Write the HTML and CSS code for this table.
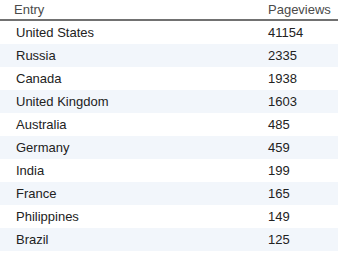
FILE: index.html
```
<!DOCTYPE html>
<html>
<head>
<meta charset="utf-8">
<link rel="stylesheet" href="styles.css">
</head>
<body>
<table class="stats">
<thead>
<tr><th class="c1">Entry</th><th class="c2">Pageviews</th></tr>
</thead>
<tbody>
<tr><td class="c1">United States</td><td class="c2">41154</td></tr>
<tr><td class="c1">Russia</td><td class="c2">2335</td></tr>
<tr><td class="c1">Canada</td><td class="c2">1938</td></tr>
<tr><td class="c1">United Kingdom</td><td class="c2">1603</td></tr>
<tr><td class="c1">Australia</td><td class="c2">485</td></tr>
<tr><td class="c1">Germany</td><td class="c2">459</td></tr>
<tr><td class="c1">India</td><td class="c2">199</td></tr>
<tr><td class="c1">France</td><td class="c2">165</td></tr>
<tr><td class="c1">Philippines</td><td class="c2">149</td></tr>
<tr><td class="c1">Brazil</td><td class="c2">125</td></tr>
</tbody>
</table>
</body>
</html>
```
FILE: styles.css
```
html, body {
  margin: 0;
  padding: 0;
  background: #ffffff;
}
.stats {
  width: 338px;
  border-collapse: collapse;
  font-family: "Liberation Sans", Arial, sans-serif;
  font-size: 13px;
  color: #222222;
}
.stats th {
  font-weight: normal;
  text-align: left;
  color: #4a4a4a;
  height: 19px;
  padding: 0;
  vertical-align: middle;
  border-bottom: 2px solid #717171;
  line-height: 19px;
}
.stats th.c1 {
  padding-left: 14px;
}
.stats th.c2 {
  padding-left: 0;
}
.stats td {
  height: 23px;
  padding: 0;
  line-height: 23px;
  vertical-align: middle;
}
.stats td.c1 {
  padding-left: 16px;
  width: 252px;
}
.stats th.c1 {
  width: 254px;
}
.stats tbody tr:nth-child(even) {
  background: #f2f6fb;
}
```
